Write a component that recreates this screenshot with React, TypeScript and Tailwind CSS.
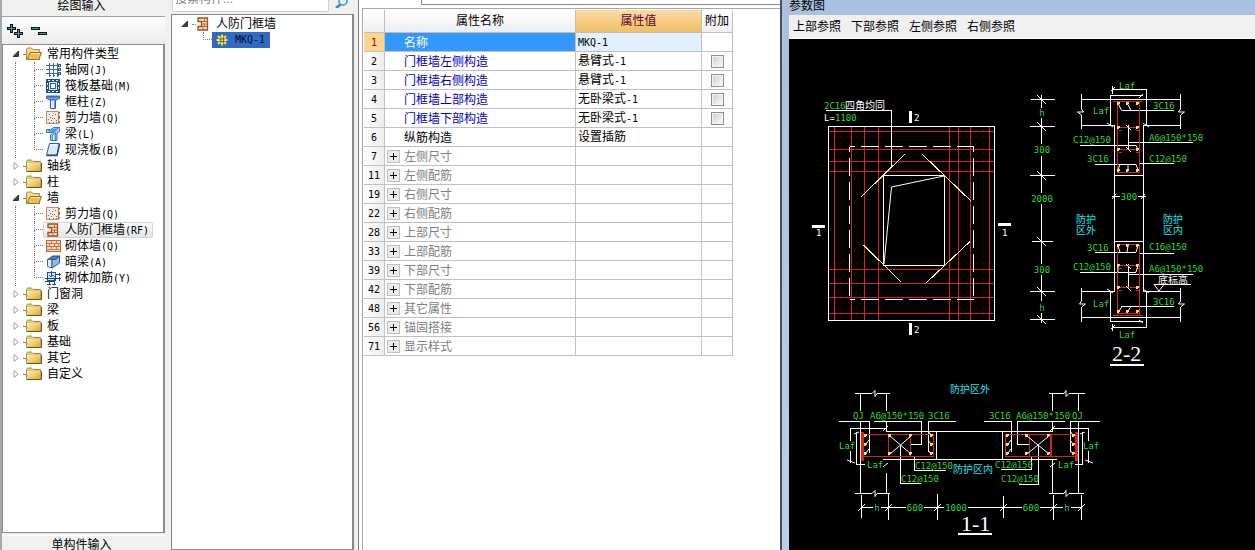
import { useState } from "react";
import type { ReactNode } from "react";

type ToolItem = { label: string; icon: ReactNode };
type Group = { label: string; items?: ToolItem[] };

const AxisIcon = () => (
  <svg width="15" height="14" viewBox="0 0 15 14" shapeRendering="crispEdges">
    <path
      d="M3.5 0V14M7.5 0V14M11.5 0V14M0 2.5H13M0 6.5H13M0 10.5H13"
      stroke="#3d67a8"
      fill="none"
    />
    <path
      d="M12.5 1.5h2v2h-2zM12.5 5.5h2v2h-2zM12.5 9.5h2v2h-2zM2.5 12.5h2M6.5 12.5h2M10.5 12.5h2"
      stroke="#2d5a9e"
      fill="#cfe0f5"
    />
  </svg>
);

const RaftIcon = () => (
  <svg width="15" height="14" viewBox="0 0 15 14" shapeRendering="crispEdges">
    <rect x="0" y="0" width="14" height="14" fill="#1f5288" />
    <path
      d="M2 1h2v1h-2zM6 1h2v1h-2zM10 1h2v1h-2zM2 12h2v1h-2zM6 12h2v1h-2zM10 12h2v1h-2zM1 4h1v2h-1zM1 8h1v2h-1zM12 4h1v2h-1zM12 8h1v2h-1z"
      fill="#e4f2ff"
    />
    <rect x="3.5" y="3.5" width="7" height="7" fill="#2a66a0" stroke="#d9ecff" />
    <rect x="5" y="5" width="4" height="4" fill="#f4faff" />
  </svg>
);

const ColumnIcon = () => (
  <svg width="15" height="14" viewBox="0 0 15 14">
    <path d="M.5 1h13v2.5l-3 1.5H3.5l-3-1.5z" fill="#7fa9e6" stroke="#2d5fb4" />
    <path d="M1.5 2h11" stroke="#2a57a5" />
    <path d="M4.5 5h5v8.500h-5z" fill="#e3eefc" stroke="#2d5fb4" />
    <path d="M8.500 6v7" stroke="#6b9ae0" />
  </svg>
);

const ShearWallIcon = () => (
  <svg width="15" height="14" viewBox="0 0 15 14" shapeRendering="crispEdges">
    <rect x=".5" y=".5" width="12" height="12" fill="#efe9e6" stroke="#c98a66" />
    <path
      d="M2 8h1v1h-1zM4 6h1v1h-1zM6 4h1v1h-1zM5 9h1v1h-1zM8 7h1v1h-1zM3 11h1v1h-1zM7 11h1v1h-1zM10 9h1v1h-1zM9 3h1v1h-1zM3 3h1v1h-1zM10 11h1v1h-1zM6 7h1v1h-1z"
      fill="#77706e"
    />
    <path d="M12 1h2v2h-1v2h1v3h-1v2h1v2h-2z" fill="#bf6f3d" />
  </svg>
);

const BeamIcon = () => (
  <svg width="15" height="14" viewBox="0 0 15 14">
    <path d="M.5 2.500h4L8 .5h5.500v4L11 6v7.500H4.500V8l4-3.500-3 1h-5z" fill="#a5d0f3" stroke="#2f78c4" />
    <path d="M2 4l10-2.500M6.500 13V8l3-2.500V13M4 5l7-2" stroke="#3f8ad2" fill="none" />
    <path d="M7.500 8v5" stroke="#f3faff" />
  </svg>
);

const SlabIcon = () => (
  <svg width="15" height="14" viewBox="0 0 15 14">
    <path d="M3.500.5h10L11 12H.5z" fill="#dce9fb" stroke="#2b5cad" />
    <path d="M.5 12.500h10.500L13.500 1" fill="none" stroke="#1e4c9c" strokeWidth="1.500" />
    <path d="M4.500 2h6" stroke="#fff" />
  </svg>
);

const FrameWallIcon = () => (
  <svg width="15" height="14" viewBox="0 0 15 14">
    <path d="M2 1h9.500v12H2v-3.500h3.500v-5H2z" fill="#f9dfc6" stroke="#a04a1e" strokeWidth="1.300" />
    <path d="M5.500 4.500h6M5.500 7h6M5.500 9.500h6M8.500 1v3.500M8.500 7v2.500M7 9.500V13" stroke="#b86233" fill="none" />
  </svg>
);

const BrickIcon = () => (
  <svg width="15" height="14" viewBox="0 0 15 14" shapeRendering="crispEdges">
    <rect x=".5" y="1.500" width="14" height="11" fill="#f8d9bf" stroke="#b8693b" />
    <path d="M1 4.500h13M1 7.500h13M1 10.500h13M5.500 2v3M10.500 2v3M3.500 5v3M8.500 5v3M12.500 5v3M5.500 8v3M10.500 8v3" stroke="#c47b4f" />
  </svg>
);

const HiddenBeamIcon = () => (
  <svg width="15" height="14" viewBox="0 0 15 14">
    <path d="M1.500 4.500L7 1h7l-4 3.500z" fill="#5b7eae" stroke="#254a7d" />
    <path d="M1.500 4.500H6V13l-4.500-1.500z" fill="#e2effb" stroke="#3a679f" />
    <path d="M6 4.500h4L13.500 1v7L6 13z" fill="#94bbe5" stroke="#2c568f" />
  </svg>
);

const TieBarIcon = () => (
  <svg width="17" height="14" viewBox="0 0 17 14" shapeRendering="crispEdges" className="-ml-px -mr-px">
    <path d="M2.500 1.500h8v8h-8z" fill="#d9e7fb" stroke="#1f4ea3" />
    <path d="M0 7.500h16M0 10.500h9M6.500 0V5M10.500 3.500h5M4.500 10v4M9.500 8v6M2 13.500h4M7 13.500h4M14.500 2v3M14.500 6v4" stroke="#17469b" fill="none" />
    <path d="M4 4l2 2 2-2 2 2" stroke="#3a6bc0" fill="none" />
  </svg>
);

const ClosedFolder = () => (
  <svg width="16" height="14" viewBox="0 0 16 14">
    <defs>
      <linearGradient id="folder" x1="0" y1="0" x2="1" y2="1">
        <stop offset="0" stopColor="#fff3b8" />
        <stop offset="1" stopColor="#e0a32c" />
      </linearGradient>
    </defs>
    <path d="M.5 12.500v-10l1-1.500h4l1.500 1.500h7.500v10z" fill="#e9c765" stroke="#a88a4a" />
    <rect x="1" y="4" width="13.500" height="8.500" fill="url(#folder)" />
    <path d="M1 12.500h14.500V4" fill="none" stroke="#6d5524" />
  </svg>
);

const OpenFolder = () => (
  <svg width="16" height="14" viewBox="0 0 16 14">
    <path d="M.5 12.500V2.500l1-1.500h4L7 2.500h6.500V12.500z" fill="#f6dd8c" stroke="#a88a4a" />
    <path d="M4 5.500h11.500L13 12.500H1z" fill="#efbd4a" stroke="#94722c" />
    <path d="M5 6.500h9" stroke="#fff0b5" />
  </svg>
);

const GearIcon = () => (
  <svg width="12" height="12" viewBox="0 0 12 12">
    <path d="M6 .5v11M.5 6h11M2 2l8 8M10 2l-8 8" stroke="#f6e83c" strokeWidth="1.800" />
    <circle cx="6" cy="6" r="3.800" fill="#f6e83c" />
    <path d="M5 3v6M7.500 3v6M3 5h6M3 7.500h6" stroke="#26364a" strokeWidth=".6" />
  </svg>
);

const Arrow = ({ open }: { open: boolean }) => (
  <svg width="8" height="10" viewBox="0 0 8 10">
    {open ? (
      <path d="M6.500 2v5.500H1z" fill="#404040" stroke="#202020" strokeWidth=".8" />
    ) : (
      <path d="M2 1.500v7L6 5z" fill="#fff" stroke="#a0a0a0" />
    )}
  </svg>
);

const groups: Group[] = [
  {
    label: "常用构件类型",
    items: [
      { label: "轴网(J)", icon: <AxisIcon /> },
      { label: "筏板基础(M)", icon: <RaftIcon /> },
      { label: "框柱(Z)", icon: <ColumnIcon /> },
      { label: "剪力墙(Q)", icon: <ShearWallIcon /> },
      { label: "梁(L)", icon: <BeamIcon /> },
      { label: "现浇板(B)", icon: <SlabIcon /> },
    ],
  },
  { label: "轴线" },
  { label: "柱" },
  {
    label: "墙",
    items: [
      { label: "剪力墙(Q)", icon: <ShearWallIcon /> },
      { label: "人防门框墙(RF)", icon: <FrameWallIcon /> },
      { label: "砌体墙(Q)", icon: <BrickIcon /> },
      { label: "暗梁(A)", icon: <HiddenBeamIcon /> },
      { label: "砌体加筋(Y)", icon: <TieBarIcon /> },
    ],
  },
  { label: "门窗洞" },
  { label: "梁" },
  { label: "板" },
  { label: "基础" },
  { label: "其它" },
  { label: "自定义" },
];

const properties = [
  { no: 1, name: "名称", value: "MKQ-1", kind: "selected" },
  { no: 2, name: "门框墙左侧构造", value: "悬臂式-1", kind: "link" },
  { no: 3, name: "门框墙右侧构造", value: "悬臂式-1", kind: "link" },
  { no: 4, name: "门框墙上部构造", value: "无卧梁式-1", kind: "link" },
  { no: 5, name: "门框墙下部构造", value: "无卧梁式-1", kind: "link" },
  { no: 6, name: "纵筋构造", value: "设置插筋", kind: "plain" },
  { no: 7, name: "左侧尺寸", value: "", kind: "group" },
  { no: 11, name: "左侧配筋", value: "", kind: "group" },
  { no: 19, name: "右侧尺寸", value: "", kind: "group" },
  { no: 22, name: "右侧配筋", value: "", kind: "group" },
  { no: 28, name: "上部尺寸", value: "", kind: "group" },
  { no: 33, name: "上部配筋", value: "", kind: "group" },
  { no: 39, name: "下部尺寸", value: "", kind: "group" },
  { no: 42, name: "下部配筋", value: "", kind: "group" },
  { no: 48, name: "其它属性", value: "", kind: "group" },
  { no: 56, name: "锚固搭接", value: "", kind: "group" },
  { no: 71, name: "显示样式", value: "", kind: "group" },
];

const nameColor: Record<string, string> = {
  selected: "bg-[#3399ff] text-white",
  link: "text-[#0000c0]",
  plain: "text-black",
  group: "text-[#808080]",
};

// latin runs are set in a narrow mono face next to the chinese text
function Mixed({ text }: { text: string }) {
  return (
    <>
      {text.split(/([\x20-\x7e]+)/).filter(Boolean).map((part, i) =>
        /^[\x20-\x7e]+$/.test(part) ? (
          <span key={i} className="font-['DejaVu_Sans_Mono',monospace] text-[10px]">
            {part}
          </span>
        ) : (
          part
        )
      )}
    </>
  );
}

function ToolTree() {
  const [active, setActive] = useState("人防门框墙(RF)");

  return (
    <ul className="pt-px">
      {groups.map((group) => (
        <li key={group.label}>
          <div className="flex h-4 items-center pl-[9px]">
            <Arrow open={!!group.items} />
            <span className="ml-[3px] mr-px w-[2px] border-t border-dotted border-[#808080]" />
            {group.items ? <OpenFolder /> : <ClosedFolder />}
            <span className="ml-[5px]">{group.label}</span>
          </div>
          {group.items && (
            <ul className="ml-3 border-l border-dotted border-[#808080]">
              {group.items.map((item, i) => (
                <li key={item.label} className="flex h-4 pl-[18px]">
                  <span className="flex w-[9px] flex-col">
                    <span className="h-2 border-b border-l border-dotted border-[#808080]" />
                    {i < group.items!.length - 1 && (
                      <span className="h-2 border-l border-dotted border-[#808080]" />
                    )}
                  </span>
                  <button
                    type="button"
                    onClick={() => setActive(item.label)}
                    className={
                      active === item.label
                        ? "flex items-center gap-1 rounded-xs border border-[#d4d4d4] bg-linear-to-b from-[#fafafa] to-[#e6e6e6] pl-[2px] pr-[3px]"
                        : "flex items-center gap-1 border border-transparent pl-[2px] pr-[3px]"
                    }
                  >
                    {item.icon}
                    <span>
                      <Mixed text={item.label} />
                    </span>
                  </button>
                </li>
              ))}
            </ul>
          )}
        </li>
      ))}
    </ul>
  );
}

function ToolPanel() {
  return (
    <aside className="flex w-[167px] shrink-0 flex-col border-l-2 border-[#a8a8a8] bg-[#f0f0f0] pr-[2px]">
      <button
        type="button"
        className="h-[17px] shrink-0 border-b border-[#a0a0a0] pb-1 pr-1 leading-3"
      >
        绘图输入
      </button>
      <div className="flex h-[27px] shrink-0 items-center gap-2 border-t border-white bg-linear-to-b from-[#fdfdfd] to-[#ececec] pl-[5px]">
        <button type="button" aria-label="展开">
          <svg width="16" height="15" viewBox="0 0 16 15" shapeRendering="crispEdges">
            <path d="M0 4.500h9M4.500 0v9M7 9.500h9M11.500 5v9" stroke="#0a1414" strokeWidth="3" />
            <path d="M1 4.500h7M4.500 1v7M8 9.500h7M11.500 6v7" stroke="#2aa198" />
          </svg>
        </button>
        <button type="button" aria-label="折叠">
          <svg width="16" height="15" viewBox="0 0 16 15" shapeRendering="crispEdges">
            <path d="M0 4.500h9M7 9.500h9" stroke="#0a1414" strokeWidth="3" />
            <path d="M1 4.500h7M8 9.500h7" stroke="#2aa198" />
          </svg>
        </button>
      </div>
      <div className="flex-1 overflow-hidden border border-r-2 border-[#8c8c90] bg-white">
        <ToolTree />
      </div>
      <button
        type="button"
        className="mt-[2px] h-[15px] shrink-0 overflow-hidden border-t border-white pr-1 leading-[18px]"
      >
        单构件输入
      </button>
    </aside>
  );
}

function ComponentPanel() {
  return (
    <section className="flex w-[191px] shrink-0 flex-col bg-[#f0f0f0] pl-1">
      <div className="flex h-[14px] shrink-0 overflow-hidden pl-px">
        <input
          type="text"
          aria-label="搜索构件"
          placeholder="搜索构件..."
          className="-mt-[15px] h-[27px] w-[157px] rounded-xs border border-[#c9d3dd] bg-white px-[2px] placeholder:text-[#808080]"
        />
        <button type="button" aria-label="搜索" className="ml-[6px] self-start">
          <svg width="15" height="8" viewBox="0 0 15 8">
            <path d="M6 4L1 8" stroke="#2f86c8" strokeWidth="2.500" />
            <circle cx="8" cy="1" r="4" fill="#e8f5ff" stroke="#55a5dd" strokeWidth="1.800" />
          </svg>
        </button>
      </div>
      <div className="mr-[4px] flex-1 border border-r-2 border-[#88888c] bg-white pl-[9px] pt-px">
        <div className="flex h-4 items-center">
          <Arrow open />
          <span className="ml-[3px] w-1 border-t border-dotted border-[#808080]" />
          <FrameWallIcon />
          <span className="ml-[5px]">人防门框墙</span>
        </div>
        <div className="flex h-4 pl-[22px]">
          <span className="h-2 w-[9px] border-b border-l border-dotted border-[#808080]" />
          <button
            type="button"
            className="flex items-center gap-[7px] bg-[#316ac5] pl-1 pr-[5px] text-[#000a30]"
          >
            <GearIcon />
            <Mixed text="MKQ-1" />
          </button>
        </div>
      </div>
    </section>
  );
}

function PropertyTable() {
  return (
    <table className="table-fixed border-separate border-spacing-0">
      <colgroup>
        <col className="w-[21px]" />
        <col className="w-[191px]" />
        <col className="w-[126px]" />
        <col className="w-[31px]" />
      </colgroup>
      <thead>
        <tr className="h-[23px] bg-linear-to-b from-white to-[#ededed]">
          <th className="border-b border-r border-[#c0c0c0]" />
          <th className="border-b border-r border-[#c0c0c0] p-0 font-normal">属性名称</th>
          <th className="border-b border-r border-[#c0c0c0] bg-linear-to-b from-[#fadba6] to-[#f0bf60] p-0 font-normal text-[#600030]">
            属性值
          </th>
          <th className="border-b border-r border-[#c0c0c0] p-0 font-normal">附加</th>
        </tr>
      </thead>
      <tbody>
        {properties.map((row) => (
          <tr key={row.no} className="h-[19px]">
            <td
              className={
                row.kind === "selected"
                  ? "border-b border-r border-[#c0c0c0] bg-[#ffd58c] p-0 text-center text-[#701030]"
                  : "border-b border-r border-[#c0c0c0] bg-linear-to-r from-white to-[#ededed] p-0 text-center"
              }
            >
              <Mixed text={String(row.no)} />
            </td>
            <td className={`border-b border-r border-[#c0c0c0] p-0 ${nameColor[row.kind]}`}>
              <div className="flex h-[18px] items-center gap-1 pl-[2px] pt-px">
                {row.kind === "group" ? (
                  <button
                    type="button"
                    aria-label={`展开${row.name}`}
                    className="flex size-[13px] items-center justify-center border border-[#c0c0c0] bg-[#e8eaee]"
                  >
                    <svg width="7" height="7" viewBox="0 0 7 7" shapeRendering="crispEdges">
                      <path d="M0 3.500h7M3.500 0v7" stroke="#000" />
                    </svg>
                  </button>
                ) : (
                  <span className="w-[13px]" />
                )}
                <span>{row.name}</span>
              </div>
            </td>
            <td
              className={
                row.kind === "selected"
                  ? "border-b border-r border-[#c0c0c0] bg-[#e0f0ff] p-0 pl-[2px]"
                  : "border-b border-r border-[#c0c0c0] p-0 pl-[2px]"
              }
            >
              <Mixed text={row.value} />
            </td>
            <td className="border-b border-r border-[#c0c0c0] p-0">
              {row.kind === "link" && (
                <input
                  type="checkbox"
                  aria-label={`附加${row.name}`}
                  className="mx-auto block size-[13px] appearance-none border border-[#8e8f8f] bg-linear-to-br from-[#c8ccd4] to-white ring-1 ring-inset ring-[#f4f4f4]"
                />
              )}
            </td>
          </tr>
        ))}
      </tbody>
    </table>
  );
}

function PropertyPanel() {
  return (
    <main className="flex w-[422px] shrink-0 flex-col border-l border-[#808080] bg-white pl-[3px]">
      <div className="ml-[59px] h-[5px] shrink-0 border-b border-l border-[#8c8c8c]" />
      <div className="mt-[3px] flex-1 border-l border-t border-[#a8a8a8] pl-px pt-px">
        <PropertyTable />
      </div>
    </main>
  );
}

type LabelProps = { x: number; y: number; children: string; color?: string; middle?: boolean };

const Code = ({ x, y, children, color = "#2bd92f", middle }: LabelProps) => (
  <text
    x={x}
    y={y}
    fill={color}
    textAnchor={middle ? "middle" : "start"}
    className="font-['DejaVu_Sans_Mono',monospace] text-[9px]"
  >
    {children}
  </text>
);

const Note = ({ x, y, children, color = "#22e2ec" }: LabelProps) => (
  <text x={x} y={y} fill={color} className="text-[10px]">
    {children}
  </text>
);

const Heading = ({ x, y, children }: LabelProps) => (
  <text x={x} y={y} fill="#fff" className="font-['Liberation_Serif',serif] text-[22px]">
    {children}
  </text>
);

const Dots = ({ at }: { at: number[][] }) => (
  <path d={at.map(([x, y]) => `M${x - 1.5} ${y - 1.5}h3v2h-1v1h-2z`).join("")} fill="#ffe43a" />
);

// wall elevation with the door opening
function Elevation() {
  return (
    <g fill="none">
      <g shapeRendering="crispEdges">
        <path
          d="M834.500 127V320M851.500 127V320M864.500 127V320M878.500 127V320M949.500 127V320M958.500 127V320M970.500 127V320M989.500 127V320M829 131.500H994M829 149.500H994M829 161.500H994M829 171.500H994M829 269.500H994M829 283.500H994M829 297.500H994M829 313.500H994"
          stroke="#d82020"
        />
        <path d="M828.500 126.500H994.500V320.500H828.500z" stroke="#fff" />
        <path
          d="M849.500 146.500H973.500M849.500 299.500H973.500M849.500 146.500V299.500M973.500 146.500V299.500"
          stroke="#fff"
          strokeDasharray="18 6"
          strokeDashoffset="13"
        />
        <path d="M883.500 175.500H944.500V265.500H883.500z" stroke="#fff" />
        <path d="M826 110.500H891.500V167" stroke="#fff" />
        <path
          d="M905 154L860.500 197.500M922.500 154.500L971.500 201.500M863.500 245L901.500 282.500M926.500 282.500L970 241.500"
          stroke="#ffff70"
        />
        <path d="M909 111h3v12h-3zM909 323h3v12h-3zM812 225h13v3h-13zM998 223h13v3h-13z" fill="#fff" />
      </g>
      <path d="M944 176L891.500 187L884 264" stroke="#fff" />
      <Code x={824} y={109}>2C16</Code>
      <Note x={845} y={109} color="#fff">四角均同</Note>
      <Code x={824} y={121} color="#fff">L=</Code>
      <Code x={835} y={121}>1100</Code>
      <Code x={914} y={121} color="#fff">2</Code>
      <Code x={914} y={333} color="#fff">2</Code>
      <Code x={816} y={236} color="#fff">1</Code>
      <Code x={1002} y={236} color="#fff">1</Code>
    </g>
  );
}

function SectionTwo() {
  return (
    <g fill="none">
      <g shapeRendering="crispEdges" stroke="#fff">
        <path d="M1031 99.500H1055M1030 126.500H1055M1030 175.500H1055M1032 241.500H1053M1030 291.500H1055M1030 319.500H1055" />
        <path d="M1041.500 95V108M1041.500 118V144M1041.500 156V193M1041.500 204V264M1041.500 275V301M1041.500 313V323" />
        <path d="M1081.500 94V109M1081.500 115V129M1180.500 94V109M1180.500 115V129M1081.500 99.500H1180.500M1081.500 125.500H1114.500V291.500H1081.500M1180.500 125.500H1143.500V291.500H1180.500M1114.500 175.500H1143.500M1114.500 241.500H1143.500" />
        <path d="M1081.500 288V301M1081.500 307V322M1180.500 288V301M1180.500 307V322M1081.500 317.500H1180.500" />
        <path d="M1112.500 86V94M1112.500 89.500H1146.500V125.500M1110.500 125.500V95.500H1142.500M1110.500 291.500V321.500H1142.500M1146.500 291.500V327.500H1112.500M1112.500 324V331" />
        <path d="M1121.500 110.500H1174M1128.500 142.500H1193M1128.500 125V149M1080 145.500H1136M1095 164.500H1136M1139 163.500H1174" />
        <path d="M1095 252.500H1136M1139 253.500H1174M1080 272.500H1136M1128.500 274.500H1193M1128.500 264V289M1121 306.500H1174M1154 284.500H1191" />
        <path d="M1112 196.500H1120M1138 196.500H1146" />
      </g>
      <path
        d="M1037 95l9 9M1037 122l9 9M1037 171l9 9M1037 237l9 9M1037 287l9 9M1037 315l9 9M1112 199l4-5M1141 199l4-5M1107 123l6 4M1143 123l6 4M1107 289l6 4M1143 289l6 4M1139 98l4-4M1139 320l4 3M1111 91l4-4M1111 329l4-4"
        stroke="#fff"
      />
      <path
        d="M1081.500 109l2 3h-6l4 3M1180.500 109l-2 3h6l-4 3M1081.500 301l-2 3h6l-4 3M1180.500 301l-2 3h6l-4 3"
        stroke="#fff"
      />
      <g shapeRendering="crispEdges" stroke="#d82020">
        <path d="M1117.500 101V172.500H1139.500V101M1113 101.500H1143M1117 127.500H1139M1117 149.500H1139M1119 130.500h3M1136 130.500h3M1119 152.500h3M1136 152.500h3" />
        <path d="M1117.500 315V244.500H1139.500V315M1113 315.500H1143M1117 265.500H1139M1117 287.500H1139M1119 268.500h3M1136 268.500h3M1119 290.500h3M1136 290.500h3M1117 313.500H1139" />
      </g>
      <path
        d="M1118 103l3.500 7.500M1127 103l4 7.500M1136 145.500l2 4M1118 170l2-5.500M1128 170v-5M1138 170l-2-5.500M1118 246l2 6M1128 246l-1 6M1138 246l-2 6M1136 272l2-6M1118 272v-6M1119 311l3-4.500M1128 311l3-4.500M1126 125l5 5M1126 147l5 5M1126 264l5 5M1126 286l5 5M1154 284.500l5 6.500l5-6.500"
        stroke="#fff"
      />
      <Dots
        at={[
          [1118.5, 103.5], [1127.5, 103.5], [1137.5, 103.5],
          [1118.5, 127.5], [1137.5, 127.5], [1118.5, 149.5], [1137.5, 149.5],
          [1118.5, 170.5], [1127.5, 170.5], [1137.5, 170.5],
          [1118.5, 245.5], [1127.5, 245.5], [1137.5, 245.5],
          [1118.5, 265.5], [1137.5, 265.5], [1118.5, 287.5], [1137.5, 287.5],
          [1118.5, 311.5], [1127.5, 311.5], [1137.5, 311.5],
        ]}
      />
      <Code x={1042} y={116} middle>h</Code>
      <Code x={1042} y={153} middle>300</Code>
      <Code x={1042} y={202} middle>2000</Code>
      <Code x={1042} y={273} middle>300</Code>
      <Code x={1042} y={311} middle>h</Code>
      <Code x={1119} y={89}>Laf</Code>
      <Code x={1093} y={114}>Laf</Code>
      <Code x={1153} y={109}>3C16</Code>
      <Code x={1073} y={143}>C12@150</Code>
      <Code x={1149} y={141}>A6@150*150</Code>
      <Code x={1087} y={162}>3C16</Code>
      <Code x={1149} y={162}>C12@150</Code>
      <Code x={1129} y={200} middle>300</Code>
      <Note x={1076} y={223}>防护</Note>
      <Note x={1076} y={234}>区外</Note>
      <Note x={1163} y={223}>防护</Note>
      <Note x={1163} y={234}>区内</Note>
      <Code x={1087} y={251}>3C16</Code>
      <Code x={1149} y={250}>C16@150</Code>
      <Code x={1073} y={270}>C12@150</Code>
      <Code x={1149} y={272}>A6@150*150</Code>
      <Note x={1158} y={284} color="#fff">底标高</Note>
      <Code x={1093} y={307}>Laf</Code>
      <Code x={1153} y={305}>3C16</Code>
      <Code x={1119} y={338}>Laf</Code>
      <Heading x={1112} y={361}>2-2</Heading>
      <path d="M1110 364h34v2h-34z" fill="#fff" />
    </g>
  );
}

function SectionOne() {
  return (
    <g fill="none">
      <g shapeRendering="crispEdges" stroke="#fff">
        <path d="M855 393.500H872M877 393.500H890M855 493.500H872M877 493.500H890M1049 393.500H1064M1069 393.500H1085M1049 493.500H1064M1069 493.500H1084" />
        <path d="M860.500 393V411M860.500 422V493M886.500 393V411M886.500 422V431.500H1052.500V422M1052.500 393V411M1078.500 393V411M1078.500 422V493" />
        <path d="M883 459.500H1057M886.500 473V493M1052.500 459V493M936.500 431V460M1002.500 431V460" />
        <path d="M887 428.500H850.500V441M850.500 451V463M856.500 432V464.500H865M1052 428.500H1088.500V441M1088.500 451V463M1082.500 432V464.500H1075" />
        <path d="M839 421.500H869.500V453M874 421.500H921.500V444.500H910M956 421.500H928.500V452M900.500 446V483.500H921M914.500 457V470.500H946" />
        <path d="M984 421.500H1011.500V452M1065 421.500H1017.500V444.500H1029M1100 421.500H1070.500V452M1038.500 446V484.500H1019M1031.500 457V469.500H1001" />
        <path d="M861.500 495V518M888.500 494V520M937.500 494V520M1003.500 496V518M1053.500 495V520M1081.500 495V520" />
        <path d="M861 507.500H873M881 507.500H906M924 507.500H944M968 507.500H1022M1040 507.500H1063M1071 507.500H1082" />
      </g>
      <path
        d="M858 511l7-7M885 511l7-7M934 511l7-7M1000 511l7-7M1050 511l7-7M1078 511l7-7M883 431l5-5M1050 431l5-5M847 460l8 3M1085 460l8 3M854 434l5-2M1080 434l5-2M883 467l5-4M1050 467l5-4"
        stroke="#fff"
      />
      <path
        d="M872 393.500l3-3v6l2-3M872 493.500l3-3v6l2-3M1064 393.500l2-3v6l3-3M1064 493.500l2-3v6l3-3"
        stroke="#fff"
      />
      <g shapeRendering="crispEdges" stroke="#d82020">
        <path d="M864 434.500H933.500V456.500H864M888.500 434V457M910.500 434V457M861.500 432V461" />
        <path d="M1076 434.500H1005.500V456.500H1076M1029.500 434V457M1077.500 432V461" />
        <path d="M863 432V461M1076 432V461M1051 434V457" strokeWidth="2" />
      </g>
      <path
        d="M890 436l21 18M911 436l-21 18M1027 436l22 18M1049 436l-22 18M869 440l-3 4M869 449l-3 4M928 431l3 4M928 440l3 4M928 450l3 4M1011 440l-3 4M1011 449l-3 4M1070 431l3 4M1070 440l3 4M1070 450l3 4"
        stroke="#fff"
      />
      <Dots
        at={[
          [865.5, 435.5], [865.5, 444.5], [865.5, 453.5],
          [889.5, 435.5], [889.5, 453.5], [910.5, 435.5], [910.5, 453.5],
          [931.5, 435.5], [931.5, 444.5], [931.5, 453.5],
          [1007.5, 435.5], [1007.5, 444.5], [1007.5, 453.5],
          [1026.5, 435.5], [1026.5, 453.5], [1048.5, 435.5], [1048.5, 453.5],
          [1073.5, 435.5], [1073.5, 444.5], [1073.5, 453.5],
        ]}
      />
      <Note x={950} y={393}>防护区外</Note>
      <Note x={953} y={473}>防护区内</Note>
      <Code x={853} y={419}>QJ</Code>
      <Code x={870} y={419}>A6@150*150</Code>
      <Code x={928} y={419}>3C16</Code>
      <Code x={839} y={449}>Laf</Code>
      <Code x={867} y={468}>Laf</Code>
      <Code x={915} y={469}>C12@150</Code>
      <Code x={901} y={482}>C12@150</Code>
      <Code x={989} y={419}>3C16</Code>
      <Code x={1016} y={419}>A6@150*150</Code>
      <Code x={1072} y={419}>QJ</Code>
      <Code x={1083} y={449}>Laf</Code>
      <Code x={1058} y={468}>Laf</Code>
      <Code x={995} y={468}>C12@150</Code>
      <Code x={1001} y={482}>C12@150</Code>
      <Code x={877} y={511} middle>h</Code>
      <Code x={915} y={511} middle>600</Code>
      <Code x={956} y={511} middle>1000</Code>
      <Code x={1031} y={511} middle>600</Code>
      <Code x={1067} y={511} middle>h</Code>
      <Heading x={961} y={531}>1-1</Heading>
      <path d="M958 533h34v2h-34z" fill="#fff" />
    </g>
  );
}

function DiagramWindow() {
  const menu = ["上部参照", "下部参照", "左侧参照", "右侧参照"];

  return (
    <section className="flex min-w-0 flex-1 flex-col overflow-hidden border-l-2 border-[#4a4f58] bg-linear-to-b from-[#a9c1de] to-[#b9d0ea] pl-[7px]">
      <h2 className="h-[15px] shrink-0 leading-3">参数图</h2>
      <nav className="flex h-6 shrink-0 items-center gap-[10px] border-b border-white bg-[#f0f0f0] pl-1">
        {menu.map((item) => (
          <button type="button" key={item}>
            {item}
          </button>
        ))}
      </nav>
      <div className="min-h-0 flex-1 overflow-hidden bg-black">
        <svg width="466" height="511" viewBox="789 39 466 511" role="img" aria-label="人防门框墙参数图">
          <Elevation />
          <SectionTwo />
          <SectionOne />
        </svg>
      </div>
    </section>
  );
}

export default function App() {
  return (
    <div className="flex h-screen overflow-hidden whitespace-nowrap bg-[#f0f0f0] font-['Liberation_Sans','Noto_Sans_CJK_SC',sans-serif] text-[12px] leading-4 text-black">
      <ToolPanel />
      <ComponentPanel />
      <PropertyPanel />
      <DiagramWindow />
    </div>
  );
}
